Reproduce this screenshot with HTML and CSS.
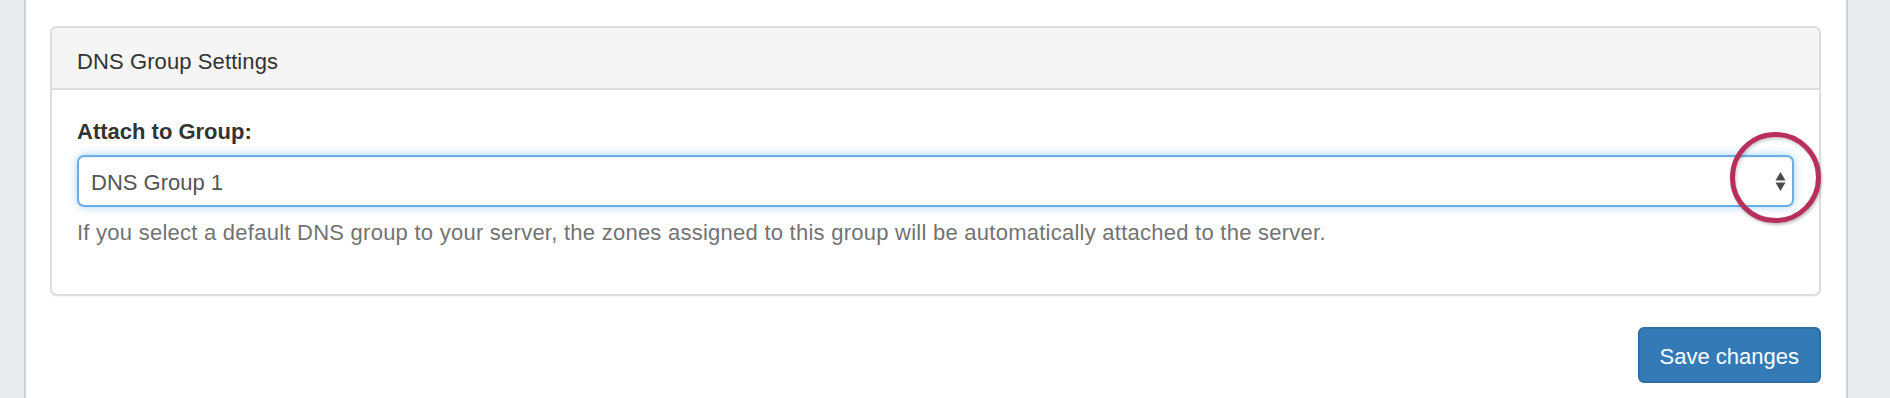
FILE: index.html
```html
<!DOCTYPE html>
<html lang="en">
<head>
<meta charset="utf-8">
<title>DNS Group Settings</title>
<link rel="stylesheet" href="styles.css">
</head>
<body>
<div class="page">
  <div class="panel">
    <div class="panel-heading">DNS Group Settings</div>
    <div class="panel-body">
      <label class="field-label">Attach to Group:</label>
      <div class="select">
        <span class="select-value">DNS Group 1</span>
        <svg class="select-arrows" width="11" height="20" viewBox="0 0 11 20" aria-hidden="true">
          <path d="M5.5 0 L10.5 8.5 L0.5 8.5 Z" fill="#4a4a4a"/>
          <path d="M0.5 10.5 L10.5 10.5 L5.5 19 Z" fill="#4a4a4a"/>
        </svg>
        <span class="annotation"></span>
      </div>
      <p class="help">If you select a default DNS group to your server, the zones assigned to this group will be automatically attached to the server.</p>
    </div>
  </div>
  <div class="actions">
    <button class="btn-primary" type="button">Save changes</button>
  </div>
</div>
</body>
</html>
```

FILE: styles.css
```css
html, body {
  margin: 0;
  padding: 0;
}

body {
  background: #e8ebee;
  font-family: "Liberation Sans", Arial, Helvetica, sans-serif;
  font-size: 22px;
  line-height: 31px;
  color: #333;
}

.page {
  box-sizing: border-box;
  margin-left: 24px;
  width: 1824px;
  min-height: 100vh;
  background: #fff;
  border-left: 2px solid #cfcfcf;
  border-right: 2px solid #cfcfcf;
  padding: 26px 25px 0 24px;
}

.panel {
  border: 2px solid #dddddd;
  border-radius: 7px;
  background: #fff;
  box-shadow: 0 1px 1px rgba(0, 0, 0, 0.05);
}

.panel-heading {
  background: #f5f5f5;
  border-bottom: 2px solid #dddddd;
  border-radius: 5px 5px 0 0;
  padding: 19px 25px 11px;
  line-height: 30px;
  color: #333;
  letter-spacing: 0.1px;
}

.panel-body {
  padding: 26px 25px 46px;
  display: flex;
  flex-direction: column;
}

.field-label {
  font-weight: bold;
  color: #333;
  margin-bottom: 8px;
}

.select {
  position: relative;
  box-sizing: border-box;
  height: 52px;
  display: flex;
  align-items: center;
  justify-content: space-between;
  border: 2px solid #66afe9;
  border-radius: 7px;
  padding: 0 6px 0 12px;
  color: #555;
  box-shadow: inset 0 1px 1px rgba(0, 0, 0, 0.075), 0 0 10px rgba(102, 175, 233, 0.55);
}

.select-value {
  padding-top: 2px;
}

.select-arrows {
  display: block;
  margin-top: 1px;
}

.annotation {
  position: absolute;
  right: -29px;
  top: -25px;
  width: 91px;
  height: 91px;
  box-sizing: border-box;
  border: 5px solid #b72f5c;
  border-radius: 50%;
  box-shadow: 1px 2px 3px rgba(0, 0, 0, 0.25), inset 1px 2px 3px rgba(0, 0, 0, 0.2);
}

.help {
  margin: 10px 0 0;
  color: #737373;
  letter-spacing: 0.25px;
}

.actions {
  display: flex;
  justify-content: flex-end;
  margin-top: 31px;
}

.btn-primary {
  font-family: inherit;
  font-size: 22px;
  line-height: 31px;
  color: #fff;
  background: #337ab7;
  border: 2px solid #2e6da4;
  border-radius: 6px;
  padding: 12px 20px 9px;
  cursor: pointer;
}
```
